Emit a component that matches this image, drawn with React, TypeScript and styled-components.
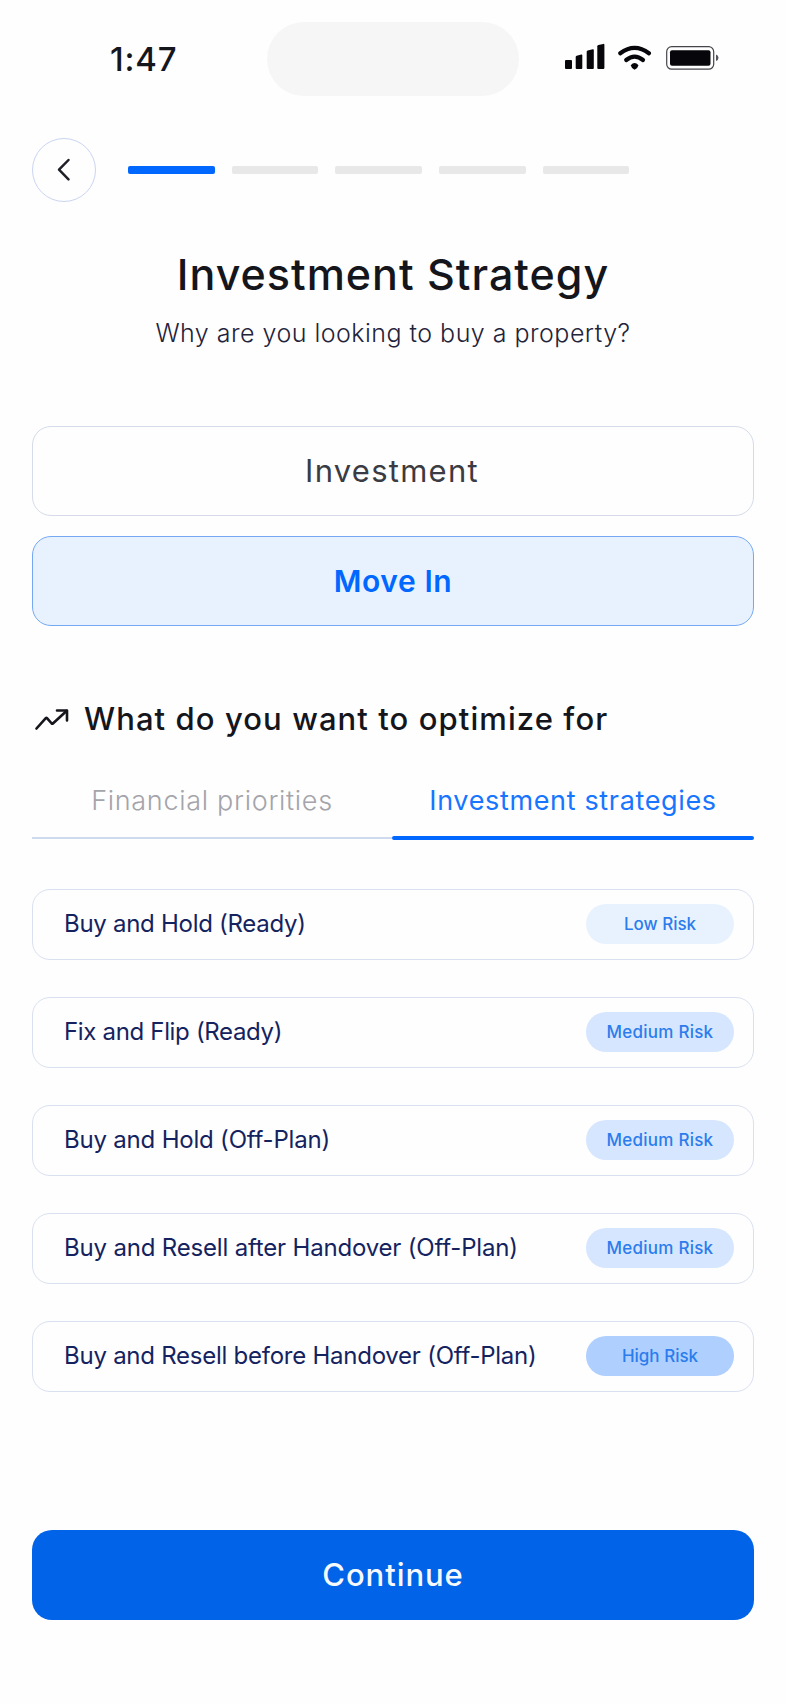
import React, { useState } from "react";
import styled, { createGlobalStyle, css } from "styled-components";

const colors = {
  page: "#fefefe",
  ink: "#15151c",
  navy: "#14235f",
  primary: "#0068ff",
  line: "#d9e0f0",
};

const GlobalStyle = createGlobalStyle`
  *, *::before, *::after { box-sizing: border-box; }
  body {
    margin: 0;
    background: ${colors.page};
    color: ${colors.ink};
    font-family: Inter, "Liberation Sans", sans-serif;
  }
  button {
    margin: 0;
    padding: 0;
    border: 0;
    background: none;
    color: inherit;
    font: inherit;
    cursor: pointer;
  }
  h1, h2, p { margin: 0; }
`;

const Screen = styled.main`
  display: flex;
  flex-direction: column;
  width: 786px;
  height: 1704px;
  padding: 0 32px;
  overflow: hidden;
`;

const StatusBar = styled.header`
  display: grid;
  grid-template-columns: 235px 252px 1fr;
  height: 74px;
  margin-top: 22px;
`;

const Clock = styled.time`
  padding-left: 78px;
  font-size: 33px;
  font-weight: 550;
  line-height: 74px;
  letter-spacing: 0.8px;
`;

const Island = styled.div`
  border-radius: 37px;
  background: #f6f6f6;
`;

const StatusIcons = styled.div`
  display: flex;
  justify-content: flex-end;
  padding: 20px 35px 0 0;
`;

const Header = styled.nav`
  display: flex;
  align-items: center;
  height: 64px;
  margin-top: 42px;
`;

const BackButton = styled.button`
  display: grid;
  place-items: center;
  width: 64px;
  height: 64px;
  border: 1px solid #c9d5f1;
  border-radius: 50%;
`;

const Progress = styled.div`
  display: flex;
  gap: 17px;
  margin-left: 32px;
`;

const Step = styled.span<{ $done?: boolean }>`
  width: 86.7px;
  height: 8px;
  border-radius: 2px;
  background: ${(p) => (p.$done ? colors.primary : "#e8e8e9")};
`;

const Title = styled.h1`
  margin-top: 48px;
  font-size: 43px;
  font-weight: 500;
  line-height: 48px;
  letter-spacing: 1px;
  text-align: center;
`;

const Subtitle = styled.p`
  margin-top: 20px;
  color: #23233a;
  font-size: 25px;
  font-weight: 300;
  line-height: 30px;
  letter-spacing: 0.48px;
  text-align: center;
`;

const Options = styled.div`
  display: flex;
  flex-direction: column;
  gap: 20px;
  margin-top: 78px;
`;

const Option = styled.button<{ $selected: boolean }>`
  height: 90px;
  padding: 0 2px 2px 0;
  border: 1px solid #d5dbe9;
  border-radius: 19px;
  color: #3b3b43;
  font-size: 31px;
  font-weight: 400;
  letter-spacing: 1.25px;
  text-align: center;
  ${(p) =>
    p.$selected &&
    css`
      padding: 0;
      border: 1.5px solid #75a8f3;
      background: #e8f2ff;
      color: ${colors.primary};
      font-size: 30px;
      font-weight: 600;
      letter-spacing: 0.6px;
    `}
`;

const SectionTitle = styled.h2`
  display: flex;
  align-items: center;
  gap: 15px;
  height: 38px;
  margin-top: 73px;
  padding-left: 3px;
  font-size: 31px;
  font-weight: 450;
  letter-spacing: 1.08px;
  white-space: nowrap;

  svg { margin-top: 2px; }
`;

const Tabs = styled.div`
  display: grid;
  grid-template-columns: 360px 1fr;
  height: 60px;
  margin-top: 43px;
`;

const Tab = styled.button<{ $active: boolean }>`
  display: flex;
  flex-direction: column;
  justify-content: space-between;
  align-items: center;
  color: #a4a4aa;
  font-size: 27px;
  font-weight: 300;
  line-height: 42px;
  letter-spacing: 0.7px;

  &::after {
    content: "";
    width: 100%;
    height: 2px;
    margin-bottom: 1px;
    background: #d0daee;
  }

  ${(p) =>
    p.$active &&
    css`
      color: #1775ff;
      font-weight: 400;
      letter-spacing: 0.65px;

      &::after {
        height: 4px;
        margin-bottom: 0;
        border-radius: 2px;
        background: ${colors.primary};
      }
    `}
`;

const StrategyList = styled.div`
  display: flex;
  flex-direction: column;
  gap: 37px;
  margin-top: 49px;
`;

const StrategyRow = styled.button`
  display: flex;
  align-items: center;
  justify-content: space-between;
  height: 71px;
  padding: 0 19px 2px 31px;
  border: 1px solid ${colors.line};
  border-radius: 18px;
`;

const StrategyName = styled.span<{ $tracking: number }>`
  color: ${colors.navy};
  font-size: 24px;
  font-weight: 400;
  line-height: 30px;
  letter-spacing: ${(p) => p.$tracking}px;
  white-space: nowrap;
`;

type Risk = "Low" | "Medium" | "High";

const riskFill: Record<Risk, string> = {
  Low: "#e8f2ff",
  Medium: "#d6e6ff",
  High: "#afcfff",
};

const RiskBadge = styled.span<{ $risk: Risk }>`
  width: 148px;
  height: 40px;
  border-radius: 20px;
  background: ${(p) => riskFill[p.$risk]};
  color: #2b7cec;
  font-size: 17px;
  font-weight: 500;
  line-height: 40px;
  letter-spacing: ${(p) => (p.$risk === "Medium" ? 0.24 : 0)}px;
  text-align: center;
`;

const ContinueButton = styled.button`
  height: 90px;
  margin-top: 138px;
  padding-bottom: 2px;
  border-radius: 20px;
  background: #0063e8;
  color: #f6faff;
  font-size: 31px;
  font-weight: 500;
  letter-spacing: 0.95px;
  text-align: center;
`;

const PhoneIcons = () => (
  <svg width="156" height="30" viewBox="563 42 156 30" fill="#07070b">
    <rect x="565" y="60" width="7" height="9" rx="1" />
    <path d="M575.7 57q0-1 1-1.300l4.600-1.100q1-.2 1 .8V68q0 1-1 1h-4.600q-1 0-1-1z" />
    <path d="M586.700 51.800q0-1 1-1.300l5-1.200q1.100-.2 1.100.8V68q0 1-1 1h-5.100q-1 0-1-1z" />
    <path d="M597.300 46.200q0-1 1-1.300l5-1q1.100-.2 1.100.8V68q0 1-1 1h-5.100q-1 0-1-1z" />
    <g fill="none" stroke="#07070b" strokeWidth="4.200" strokeLinecap="round">
      <path d="M620.300 53.200Q634.600 42.600 648.900 53.200" />
      <path d="M626.200 60Q634.600 53.200 643 60" />
    </g>
    <path d="M630.700 65.200Q634.600 60.700 638.500 65.200Q638.200 67.500 634.600 69.800Q631 67.500 630.700 65.200z" />
    <rect x="666.700" y="46.700" width="47" height="22.500" rx="5" fill="none" stroke="#44444a" strokeWidth="1.200" />
    <rect x="670" y="50.200" width="40.500" height="15.600" rx="2" />
    <path d="M716 54.500Q718.500 55.200 718.500 57.700T716 61z" fill="#55555b" />
  </svg>
);

const ChevronIcon = () => (
  <svg width="24" height="26" viewBox="0 0 24 26" fill="none" stroke="#1f1f29" strokeWidth="2.500" strokeLinecap="round" strokeLinejoin="round">
    <path d="M16.500 3 7 12.700 16.500 22.300" />
  </svg>
);

const TrendIcon = () => (
  <svg width="34" height="24" viewBox="0 0 34 24" fill="none" stroke={colors.ink} strokeWidth="2.600" strokeLinecap="round" strokeLinejoin="round">
    <path d="M1.500 21.500 10.800 11.100Q11.400 10.500 12 11.100L16.700 16.500Q17.300 17.100 17.900 16.500L31.500 4" />
    <path d="M22 3.500H32V13.500" />
  </svg>
);

const goals = ["Investment", "Move In"];
const tabs = ["Financial priorities", "Investment strategies"];
const strategies: { name: string; risk: Risk; tracking: number }[] = [
  { name: "Buy and Hold (Ready)", risk: "Low", tracking: -0.28 },
  { name: "Fix and Flip (Ready)", risk: "Medium", tracking: -0.33 },
  { name: "Buy and Hold (Off-Plan)", risk: "Medium", tracking: -0.2 },
  { name: "Buy and Resell after Handover (Off-Plan)", risk: "Medium", tracking: -0.18 },
  { name: "Buy and Resell before Handover (Off-Plan)", risk: "High", tracking: -0.25 },
];

export default function App() {
  const [goal, setGoal] = useState("Move In");
  const [tab, setTab] = useState("Investment strategies");

  return (
    <Screen>
      <GlobalStyle />
      <StatusBar>
        <Clock>1:47</Clock>
        <Island />
        <StatusIcons>
          <PhoneIcons />
        </StatusIcons>
      </StatusBar>

      <Header>
        <BackButton aria-label="Back">
          <ChevronIcon />
        </BackButton>
        <Progress>
          {[0, 1, 2, 3, 4].map((i) => (
            <Step key={i} $done={i === 0} />
          ))}
        </Progress>
      </Header>

      <Title>Investment Strategy</Title>
      <Subtitle>Why are you looking to buy a property?</Subtitle>

      <Options>
        {goals.map((g) => (
          <Option key={g} $selected={g === goal} onClick={() => setGoal(g)}>
            {g}
          </Option>
        ))}
      </Options>

      <SectionTitle>
        <TrendIcon />
        What do you want to optimize for
      </SectionTitle>

      <Tabs>
        {tabs.map((t) => (
          <Tab key={t} $active={t === tab} onClick={() => setTab(t)}>
            {t}
          </Tab>
        ))}
      </Tabs>

      <StrategyList>
        {strategies.map((s) => (
          <StrategyRow key={s.name}>
            <StrategyName $tracking={s.tracking}>{s.name}</StrategyName>
            <RiskBadge $risk={s.risk}>{s.risk} Risk</RiskBadge>
          </StrategyRow>
        ))}
      </StrategyList>

      <ContinueButton>Continue</ContinueButton>
    </Screen>
  );
}
